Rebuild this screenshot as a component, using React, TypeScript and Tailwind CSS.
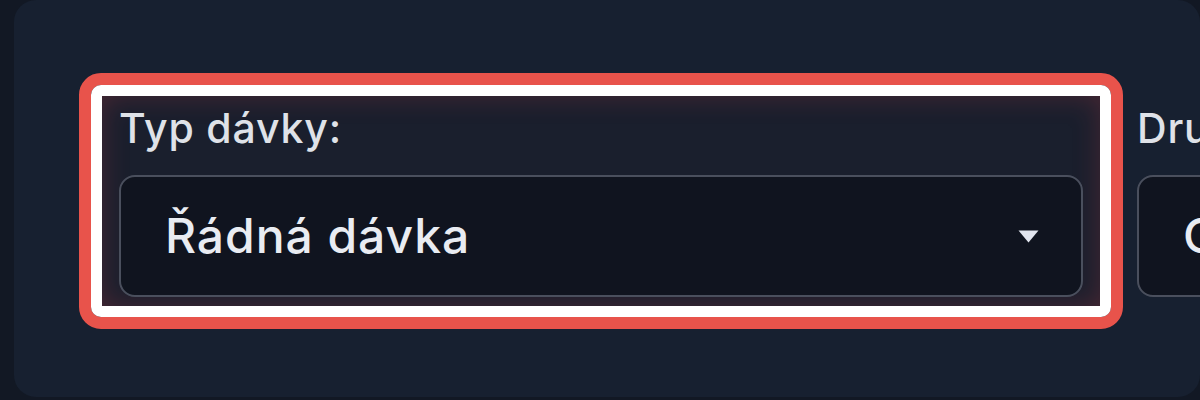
interface Field {
  label: string;
  value: string;
  highlighted?: boolean;
}

const FIELDS: Field[] = [
  { label: 'Typ dávky:', value: 'Řádná dávka', highlighted: true },
  { label: 'Druh dávky:', value: 'Ošetřovací' },
];

function Caret() {
  return (
    <svg width="21" height="13" viewBox="0 0 21 13" className="shrink-0">
      <path d="M0.5 0.5 L20.5 0.5 L10.5 12.5 Z" fill="#e2e6ef" />
    </svg>
  );
}

function SelectField({ label, value, highlighted }: Field) {
  return (
    <div
      className={`relative flex w-[1000px] shrink-0 flex-col px-[18px] pb-[10px] pt-[8px] ${
        highlighted ? 'rounded-[3px] bg-[#1a1f2d] shadow-[inset_0_0_28px_rgba(200,60,70,0.28)]' : ''
      }`}
    >
      <label className="text-[41px] font-medium leading-[50px] tracking-[0.02em] text-[#dfe2e8]">{label}</label>
      <div className="mt-[22px] flex h-[122px] items-center justify-between rounded-[16px] border-2 border-[#4a4f5d] bg-[#10141f] pl-[44px] pr-[42px]">
        <span className="text-[48px] font-medium tracking-[0.02em] text-[#e9ecf2]">{value}</span>
        <Caret />
      </div>
      {highlighted && (
        <div className="pointer-events-none absolute -inset-[22px] rounded-[22px] border-[12px] border-[#e8534b]">
          <div className="absolute inset-0 rounded-[10px] border-[11px] border-white" />
        </div>
      )}
    </div>
  );
}

export default function App() {
  return (
    <div className="h-[400px] w-[1200px] overflow-hidden bg-[#121824] pl-[14px] font-['Inter','Noto_Sans',sans-serif]">
      <div className="flex h-[397px] items-start gap-[18px] overflow-hidden rounded-[22px] bg-[#172030] pl-[87px] pt-[95px]">
        {FIELDS.map((f) => (
          <SelectField key={f.label} {...f} />
        ))}
      </div>
    </div>
  );
}
